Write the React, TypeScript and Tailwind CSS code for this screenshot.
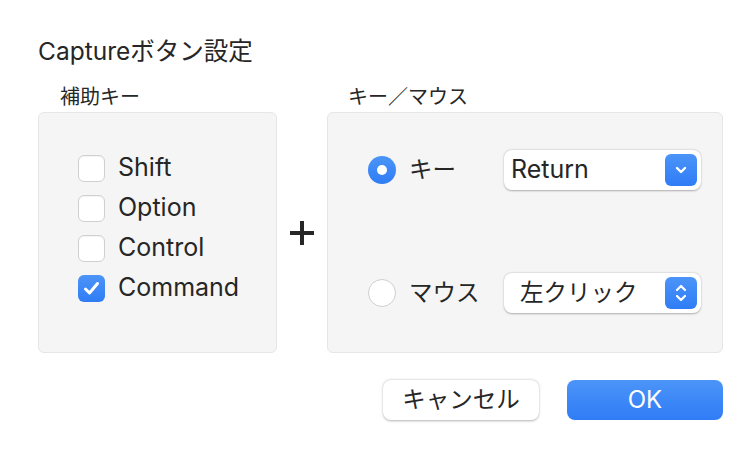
import React from "react";

const FONT = "font-['Inter','Noto_Sans_CJK_JP',sans-serif]";

const MODIFIERS = [
  { label: "Shift", checked: false },
  { label: "Option", checked: false },
  { label: "Control", checked: false },
  { label: "Command", checked: true },
];

function Checkbox({ checked }: { checked: boolean }) {
  if (checked) {
    return (
      <span className="flex h-[27px] w-[27px] items-center justify-center rounded-[6px] bg-gradient-to-b from-[#4b94f8] to-[#2f7cf6]">
        <svg width="17" height="15" viewBox="0 0 17 15" fill="none">
          <path d="M2.5 8 L6.5 12 L14.5 2.5" stroke="white" strokeWidth="3" strokeLinecap="round" strokeLinejoin="round" />
        </svg>
      </span>
    );
  }
  return <span className="h-[27px] w-[27px] rounded-[6px] border border-[#d0d0d0] bg-white shadow-[inset_0_1px_1px_rgba(0,0,0,0.05)]" />;
}

function Radio({ checked }: { checked: boolean }) {
  if (checked) {
    return (
      <span className="flex h-[28px] w-[28px] items-center justify-center rounded-full bg-gradient-to-b from-[#4b94f8] to-[#2f7cf6]">
        <span className="h-[10px] w-[10px] rounded-full bg-white" />
      </span>
    );
  }
  return <span className="h-[28px] w-[28px] rounded-full border border-[#cfcfcf] bg-white" />;
}

function Select({ value, kind }: { value: string; kind: "down" | "updown" }) {
  return (
    <div className="flex h-[40px] w-[197px] items-center justify-between rounded-[8px] bg-white pl-[7px] pr-[4px] shadow-[0_0.5px_2px_rgba(0,0,0,0.3)]">
      {kind === "down" ? (
        <span className="text-[25px]">{value}</span>
      ) : (
        <span className="pl-[9px] text-[23.5px]">{value}</span>
      )}
      <span className="flex h-[32px] w-[32px] items-center justify-center rounded-[6px] bg-gradient-to-b from-[#4b94f8] to-[#2f7cf6]">
        {kind === "down" ? (
          <svg width="14" height="10" viewBox="0 0 14 10" fill="none">
            <path d="M3 3 L7 7 L11 3" stroke="white" strokeWidth="2.4" strokeLinecap="round" strokeLinejoin="round" />
          </svg>
        ) : (
          <svg width="14" height="24" viewBox="0 0 14 24" fill="none">
            <path d="M3 9 L7 5 L11 9" stroke="white" strokeWidth="2.2" strokeLinecap="round" strokeLinejoin="round" />
            <path d="M3 15 L7 19 L11 15" stroke="white" strokeWidth="2.2" strokeLinecap="round" strokeLinejoin="round" />
          </svg>
        )}
      </span>
    </div>
  );
}

export default function App() {
  return (
    <div className={`${FONT} h-[460px] w-[756px] bg-white pl-[38px] pr-[33px] pt-[35px] text-[#262626]`}>
      <h1 className="h-[32px] text-[24.5px] leading-[32px]">Captureボタン設定</h1>

      <div className="mt-[17px] flex">
        {/* modifier keys */}
        <div className="w-[239px] shrink-0">
          <div className="pl-[22px] text-[20px] leading-[26px]">補助キー</div>
          <div className="mt-[2px] h-[241px] rounded-[6px] border border-[#e6e6e6] bg-[#f5f5f5] pl-[39px] pt-[35px]">
            {MODIFIERS.map((m) => (
              <div key={m.label} className="flex h-[40px] items-center gap-[13px] text-[25px]">
                <Checkbox checked={m.checked} />
                <span>{m.label}</span>
              </div>
            ))}
          </div>
        </div>

        {/* plus */}
        <div className="flex w-[50px] shrink-0 items-center justify-center pt-[28px]">
          <svg width="26" height="26" viewBox="0 0 26 26">
            <rect x="11" y="1" width="4" height="24" fill="#262626" />
            <rect x="1" y="11" width="24" height="4" fill="#262626" />
          </svg>
        </div>

        {/* key / mouse */}
        <div className="w-[396px] shrink-0">
          <div className="pl-[21px] text-[20px] leading-[26px]">キー／マウス</div>
          <div className="mt-[2px] flex h-[241px] flex-col gap-[83px] rounded-[6px] border border-[#e6e6e6] bg-[#f5f5f5] pl-[40px] pt-[37px] text-[23.5px]">
            <div className="flex h-[40px] items-center">
              <Radio checked />
              <span className="ml-[13px] w-[95px]">キー</span>
              <Select value="Return" kind="down" />
            </div>
            <div className="flex h-[40px] items-center">
              <Radio checked={false} />
              <span className="ml-[13px] w-[95px]">マウス</span>
              <Select value="左クリック" kind="updown" />
            </div>
          </div>
        </div>
      </div>

      <div className="mt-[27px] flex justify-end gap-[28px] text-[23.5px]">
        <button className="h-[40px] w-[156px] rounded-[8px] bg-white shadow-[0_0.5px_2.5px_rgba(0,0,0,0.3)]">キャンセル</button>
        <button className="h-[40px] w-[156px] rounded-[8px] bg-gradient-to-b from-[#4b94f8] to-[#2f7cf6] text-[24px] text-white">OK</button>
      </div>
    </div>
  );
}
